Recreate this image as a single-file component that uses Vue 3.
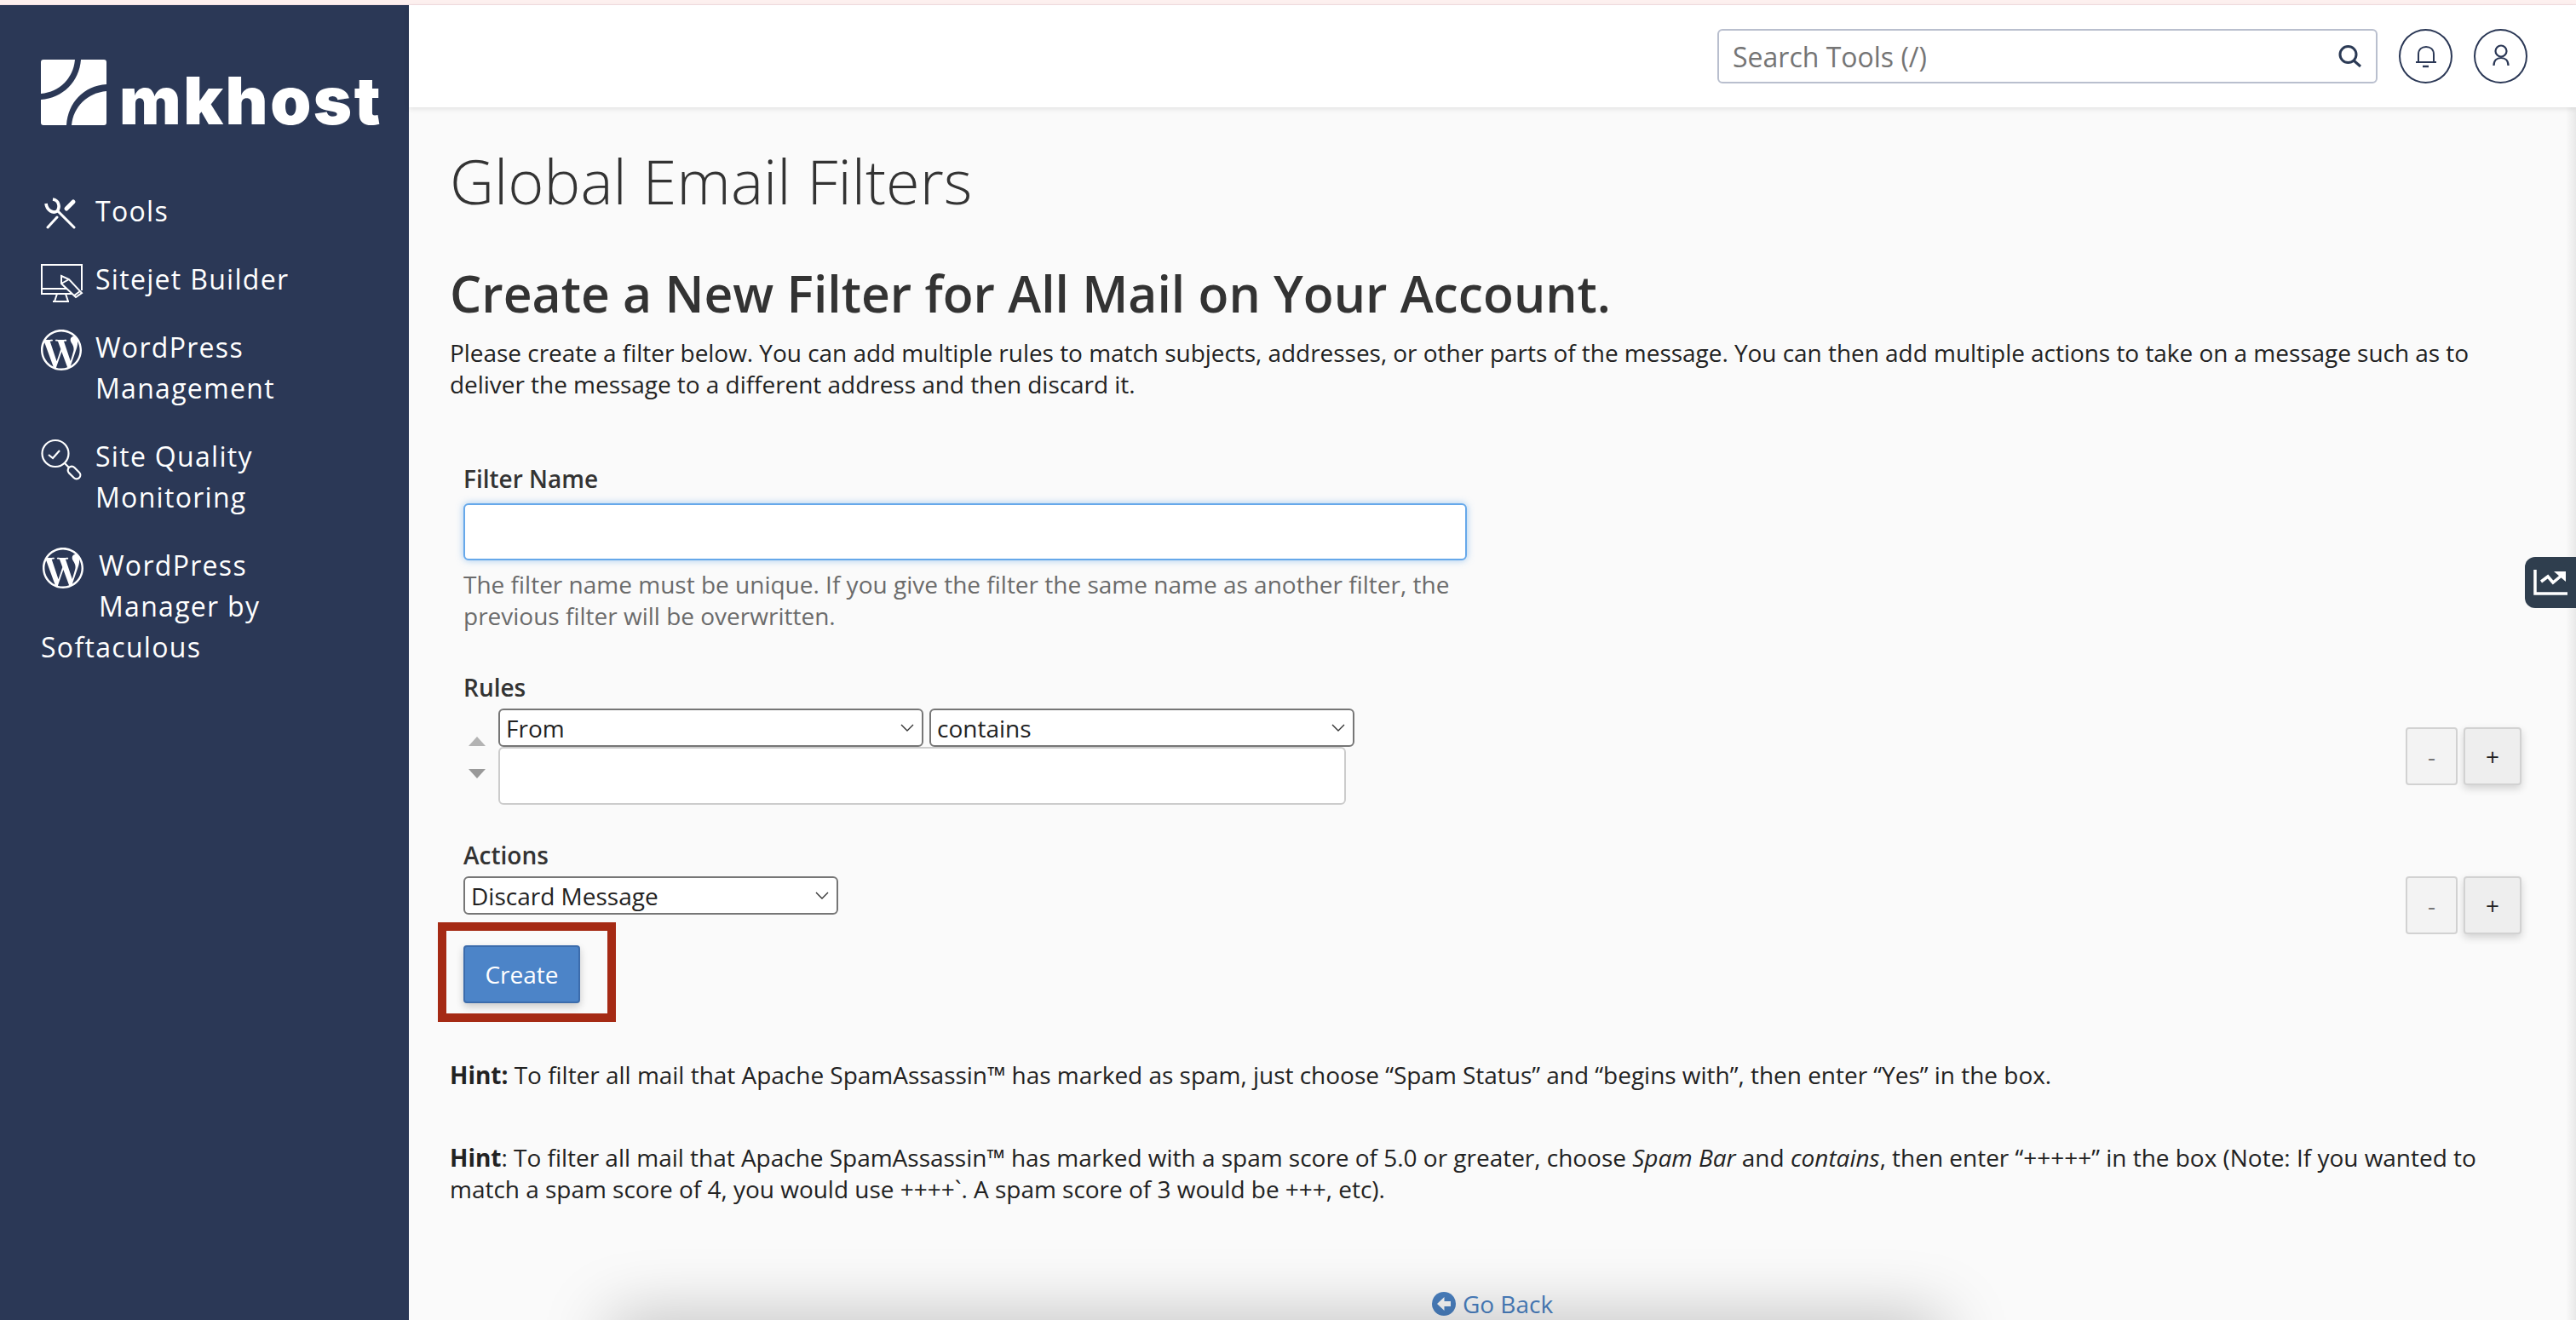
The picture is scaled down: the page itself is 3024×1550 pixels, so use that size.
<template>
  <div class="page">
    <div class="top-strip"></div>
    <div class="layout">
      <aside class="sidebar">
        <div class="logo">
          <svg class="logo-mark" viewBox="0 0 77 77" fill="#fff">
            <path d="M3 0H40C38 22 22 38 0 40V3Q0 0 3 0Z" />
            <path d="M47 0H74Q77 0 77 3V29C50 31 32 50 30 77H3Q0 77 0 74V47C26 45 45 26 47 0Z" />
            <path d="M77 37V74Q77 77 74 77H36C38 55 55 39 77 37Z" />
          </svg>
          <span class="logo-text">mkhost</span>
        </div>
        <nav class="nav">
          <a class="nav-item">
            <svg class="nav-icon" viewBox="0 0 48 48" fill="none" stroke="#fff" stroke-width="3">
              <path d="M8 43L19 31" stroke-linecap="round" />
              <path d="M30 21L38 13" stroke-width="5" stroke-linecap="round" />
              <path d="M39 43L20 24" stroke-linecap="round" />
              <path d="M14 10C21 11 23 19 19 24C14 27 7 23 6 15" stroke-width="3.6" />
            </svg>
            <span>Tools</span>
          </a>
          <a class="nav-item">
            <svg class="nav-icon" viewBox="0 0 48 48" fill="none" stroke="#fff" stroke-width="2">
              <path d="M30 35H1V7H48V37" />
              <path d="M1 35V41H36" />
              <path d="M19 41L16 50M29 41L32 50M14 50H33" />
              <path d="M24 20L33 24L48 40L41 45L24 29Z" />
              <path d="M24 29L33 24M39 43L46 38" />
            </svg>
            <span>Sitejet Builder</span>
          </a>
          <a class="nav-item">
            <svg class="nav-icon nav-icon-wp" viewBox="0 0 24 24" fill="#fff">
              <path d="M21.469 6.825c.84 1.537 1.318 3.3 1.318 5.175 0 3.979-2.156 7.456-5.363 9.325l3.295-9.527c.615-1.54.82-2.771.82-3.864 0-.405-.026-.78-.07-1.11m-7.981.105c.647-.03 1.232-.105 1.232-.105.582-.075.514-.93-.067-.899 0 0-1.755.135-2.88.135-1.064 0-2.85-.15-2.85-.15-.585-.03-.661.855-.075.885 0 0 .54.061 1.125.09l1.68 4.605-2.37 7.08L5.354 6.9c.649-.03 1.234-.1 1.234-.1.585-.075.516-.93-.065-.896 0 0-1.746.138-2.874.138-.2 0-.438-.008-.69-.015C4.911 3.15 8.235 1.215 12 1.215c2.809 0 5.365 1.072 7.286 2.833-.046-.003-.091-.009-.141-.009-1.06 0-1.812.923-1.812 1.914 0 .89.513 1.643 1.06 2.531.411.72.89 1.643.89 2.977 0 .915-.354 1.994-.821 3.479l-1.075 3.585-3.9-11.61.001.014zM12 22.784c-1.059 0-2.081-.153-3.048-.437l3.237-9.406 3.315 9.087c.024.053.05.101.078.149-1.12.393-2.325.609-3.582.609M1.211 12c0-1.564.336-3.05.935-4.39L7.29 21.709C3.694 19.96 1.212 16.271 1.211 12M12 0C5.385 0 0 5.385 0 12s5.385 12 12 12 12-5.385 12-12S18.615 0 12 0" />
            </svg>
            <span>WordPress<br />Management</span>
          </a>
          <a class="nav-item">
            <svg class="nav-icon" viewBox="0 0 48 48" fill="none" stroke="#fff" stroke-width="2.2">
              <circle cx="17" cy="20.5" r="15.5" />
              <path d="M9 22L14 26L22 17" />
              <path d="M28 32L33 37" />
              <rect x="0" y="-4.5" width="17" height="9" rx="4.5" transform="translate(33 37) rotate(45)" />
            </svg>
            <span>Site Quality<br />Monitoring</span>
          </a>
          <a class="nav-item nav-item-float">
            <svg class="nav-icon nav-icon-wp nav-icon-float" viewBox="0 0 24 24" fill="#fff">
              <path d="M21.469 6.825c.84 1.537 1.318 3.3 1.318 5.175 0 3.979-2.156 7.456-5.363 9.325l3.295-9.527c.615-1.54.82-2.771.82-3.864 0-.405-.026-.78-.07-1.11m-7.981.105c.647-.03 1.232-.105 1.232-.105.582-.075.514-.93-.067-.899 0 0-1.755.135-2.88.135-1.064 0-2.85-.15-2.85-.15-.585-.03-.661.855-.075.885 0 0 .54.061 1.125.09l1.68 4.605-2.37 7.08L5.354 6.9c.649-.03 1.234-.1 1.234-.1.585-.075.516-.93-.065-.896 0 0-1.746.138-2.874.138-.2 0-.438-.008-.69-.015C4.911 3.15 8.235 1.215 12 1.215c2.809 0 5.365 1.072 7.286 2.833-.046-.003-.091-.009-.141-.009-1.06 0-1.812.923-1.812 1.914 0 .89.513 1.643 1.06 2.531.411.72.89 1.643.89 2.977 0 .915-.354 1.994-.821 3.479l-1.075 3.585-3.9-11.61.001.014zM12 22.784c-1.059 0-2.081-.153-3.048-.437l3.237-9.406 3.315 9.087c.024.053.05.101.078.149-1.12.393-2.325.609-3.582.609M1.211 12c0-1.564.336-3.05.935-4.39L7.29 21.709C3.694 19.96 1.212 16.271 1.211 12M12 0C5.385 0 0 5.385 0 12s5.385 12 12 12 12-5.385 12-12S18.615 0 12 0" />
            </svg>
            WordPress Manager by Softaculous
          </a>
        </nav>
      </aside>

      <div class="main">
        <header class="topbar">
          <div class="search">
            <input class="search-input" type="text" placeholder="Search Tools (/)" />
            <svg class="search-icon" viewBox="0 0 28 28" fill="none" stroke="#2b3a55" stroke-width="3">
              <circle cx="11.5" cy="12" r="9.5" />
              <path d="M18 19L26 26" />
            </svg>
          </div>
          <button class="round-btn">
            <svg viewBox="0 0 24 32" width="24" height="32" fill="none" stroke="#2b3856" stroke-width="2">
              <path d="M3 23V14C3 8 7 5 12 5S21 8 21 14V23" />
              <path d="M0 23H24" />
              <path d="M8 28H15" stroke-width="2.4" />
            </svg>
          </button>
          <button class="round-btn">
            <svg viewBox="0 0 24 32" width="24" height="32" fill="none" stroke="#2b3856" stroke-width="2.2">
              <circle cx="12" cy="10" r="6.5" />
              <path d="M3.5 27C3.5 21 7 18 12 18S20.5 21 20.5 27" />
            </svg>
          </button>
        </header>

        <main class="content">
          <h1 class="title">Global Email Filters</h1>
          <h2 class="subtitle">Create a New Filter for All Mail on Your Account.</h2>
          <p class="intro">Please create a filter below. You can add multiple rules to match subjects, addresses, or other parts of the message. You can then add multiple actions to take on a message such as to deliver the message to a different address and then discard it.</p>

          <form class="filter-form" @submit.prevent>
            <label class="field-label first">Filter Name</label>
            <input class="name-input" type="text" />
            <p class="help">The filter name must be unique. If you give the filter the same name as another filter, the previous filter will be overwritten.</p>

            <label class="field-label rules-label">Rules</label>
            <div class="rule-row">
              <div class="arrows">
                <span class="arrow-up"></span>
                <span class="arrow-down"></span>
              </div>
              <div class="rule-fields">
                <div class="rule-selects">
                  <select class="sel sel-rule"><option>From</option></select>
                  <select class="sel sel-rule"><option>contains</option></select>
                </div>
                <input class="rule-input" type="text" />
              </div>
              <div class="step-btns">
                <button class="step minus" type="button">-</button>
                <button class="step plus" type="button">+</button>
              </div>
            </div>

            <label class="field-label actions-label">Actions</label>
            <div class="action-row">
              <select class="sel sel-action"><option>Discard Message</option></select>
              <div class="step-btns">
                <button class="step minus" type="button">-</button>
                <button class="step plus" type="button">+</button>
              </div>
            </div>

            <div class="create-wrap">
              <button class="create" type="submit">Create</button>
              <div class="highlight"></div>
            </div>
          </form>

          <p class="hint hint-first"><b>Hint:</b> To filter all mail that Apache SpamAssassin™ has marked as spam, just choose “Spam Status” and “begins with”, then enter “Yes” in the box.</p>
          <p class="hint hint-second"><b>Hint</b>: To filter all mail that Apache SpamAssassin™ has marked with a spam score of 5.0 or greater, choose <i>Spam Bar</i> and <i>contains</i>, then enter “+++++” in the box (Note: If you wanted to match a spam score of 4, you would use ++++`. A spam score of 3 would be +++, etc).</p>

          <a class="go-back">
            <svg viewBox="0 0 28 28" width="28" height="28">
              <circle cx="14" cy="14" r="14" fill="#4a80c0" />
              <path d="M14.5 6L6 14L14.5 22V17H22V11H14.5Z" fill="#fafafa" />
            </svg>
            Go Back
          </a>
        </main>
      </div>
    </div>

    <div class="stats-tab">
      <svg viewBox="0 0 40 30" width="40" height="30" fill="none" stroke="#fff" stroke-width="3.5">
        <path d="M2 0V28H40" />
        <path d="M9 14L17 8L23 15L34 6" />
        <path d="M24 2H38V14Z" fill="#fff" stroke="none" />
      </svg>
    </div>
    <div class="edge-shade"></div>
    <div class="bottom-shadow"></div>
  </div>
</template>

<script setup>
</script>

<style>
html,
body {
  margin: 0;
  background: #fafafa;
}
</style>

<style scoped>
.page {
  position: relative;
  width: 3024px;
  height: 1550px;
  overflow: hidden;
  background: #fafafa;
  font-family: "Open Sans", "Liberation Sans", sans-serif;
  color: #333;
}

.top-strip {
  height: 6px;
  background: #fdf0ef;
  border-bottom: 1px solid #f3dfe2;
  box-sizing: border-box;
}

.layout {
  display: flex;
  height: 1544px;
}

.sidebar {
  width: 480px;
  flex-shrink: 0;
  box-sizing: border-box;
  padding: 64px 30px 0 48px;
  background: #2b3856;
  color: #fff;
}

.logo {
  display: flex;
  align-items: flex-end;
  gap: 15px;
  height: 77px;
}

.logo-mark {
  width: 77px;
  height: 77px;
  flex-shrink: 0;
}

.logo-text {
  font-family: Inter, "Liberation Sans", sans-serif;
  font-weight: 900;
  font-size: 77px;
  line-height: 58px;
  letter-spacing: 2.6px;
  color: #fff;
}

.nav {
  margin-top: 77px;
  width: 340px;
  display: flex;
  flex-direction: column;
  gap: 32px;
  font-size: 32px;
  line-height: 48px;
  letter-spacing: 1.3px;
}

.nav-item {
  display: flex;
  align-items: flex-start;
  gap: 16px;
}

.nav-icon {
  width: 48px;
  height: 48px;
  flex-shrink: 0;
  overflow: visible;
}

.nav-icon-wp {
  margin-top: 3px;
}

.nav-item-float {
  display: block;
}

.nav-icon-float {
  float: left;
  margin: 3px 18px 37px 2px;
}

.main {
  flex: 1;
  min-width: 0;
}

.topbar {
  height: 120px;
  box-sizing: border-box;
  padding: 28px 57px 0 0;
  display: flex;
  justify-content: flex-end;
  align-items: flex-start;
  gap: 25px;
  background: #fff;
  box-shadow: 0 2px 6px rgba(0, 0, 0, 0.1);
}

.search {
  position: relative;
  width: 775px;
  height: 64px;
}

.search-input {
  width: 100%;
  height: 100%;
  box-sizing: border-box;
  border: 2px solid #b9bfce;
  border-radius: 6px;
  padding: 0 16px;
  font-family: inherit;
  font-size: 32px;
  background: #fff;
  outline: none;
}

.search-input::placeholder {
  color: #757575;
}

.search-icon {
  position: absolute;
  right: 18px;
  top: 18px;
  width: 28px;
  height: 28px;
}

.round-btn {
  width: 63px;
  height: 64px;
  padding: 0;
  border: 2px solid #2b3856;
  border-radius: 50%;
  background: #fff;
  display: flex;
  align-items: center;
  justify-content: center;
}

.content {
  padding: 0 64px 0 48px;
}

.title {
  margin: 44px 0 0;
  font-size: 72px;
  line-height: 84px;
  font-weight: 300;
  color: #333;
}

.subtitle {
  margin: 48px 0 0;
  font-size: 58.8px;
  line-height: 84px;
  font-weight: 600;
  color: #333;
}

.intro {
  margin: 10px 0 0;
  font-size: 28px;
  line-height: 37px;
  letter-spacing: -0.04px;
  color: #222;
}

.filter-form {
  padding-left: 16px;
}

.field-label {
  display: block;
  font-size: 28px;
  line-height: 37px;
  font-weight: 600;
  color: #333;
}

.first {
  margin-top: 74px;
}

.name-input {
  display: block;
  width: 1178px;
  height: 67px;
  margin-top: 10px;
  box-sizing: border-box;
  border: 2px solid #66a8ea;
  border-radius: 6px;
  background: #fff;
  box-shadow: 0 0 8px rgba(102, 168, 234, 0.6);
  outline: none;
}

.help {
  width: 1178px;
  margin: 10px 0 0;
  font-size: 28px;
  line-height: 37px;
  color: #6b6b6b;
}

.rules-label {
  margin-top: 47px;
}

.rule-row {
  display: flex;
  margin-top: 6px;
}

.arrows {
  width: 41px;
  flex-shrink: 0;
  padding-top: 33px;
  box-sizing: border-box;
}

.arrow-up,
.arrow-down {
  display: block;
  width: 0;
  margin-left: 6px;
  border-left: 10px solid transparent;
  border-right: 10px solid transparent;
}

.arrow-up {
  border-bottom: 11px solid #b3b3b3;
}

.arrow-down {
  margin-top: 27px;
  border-top: 11px solid #999;
}

.rule-fields {
  flex: 1;
}

.rule-selects {
  display: flex;
  gap: 7px;
}

.sel {
  appearance: none;
  height: 45px;
  box-sizing: border-box;
  border: 2px solid #767676;
  border-radius: 6px;
  padding: 0 7px;
  background: #fff url("data:image/svg+xml,%3Csvg xmlns='http://www.w3.org/2000/svg' width='16' height='9'%3E%3Cpath d='M1 1L8 8L15 1' fill='none' stroke='%23333' stroke-width='1.4'/%3E%3C/svg%3E") no-repeat right 9px center;
  font-family: inherit;
  font-size: 28px;
  color: #222;
}

.sel-rule {
  width: 499px;
}

.sel-action {
  width: 440px;
}

.rule-input {
  display: block;
  width: 995px;
  height: 68px;
  box-sizing: border-box;
  border: 2px solid #ccc;
  border-radius: 6px;
  background: #fff;
  outline: none;
}

.step-btns {
  display: flex;
  gap: 7px;
}

.rule-row .step-btns {
  margin-top: 22px;
}

.step {
  height: 68px;
  box-sizing: border-box;
  padding: 0;
  border: 2px solid #d2d2d2;
  border-radius: 4px;
  font-family: inherit;
  font-size: 28px;
}

.minus {
  width: 61px;
  background: #f3f3f3;
  color: #777;
}

.plus {
  width: 68px;
  background: #eee;
  color: #222;
  box-shadow: 0 4px 10px rgba(0, 0, 0, 0.16);
}

.actions-label {
  margin-top: 41px;
}

.action-row {
  display: flex;
  justify-content: space-between;
  margin-top: 6px;
}

.create-wrap {
  position: relative;
  margin-top: 13px;
  width: 137px;
}

.create {
  display: block;
  width: 137px;
  height: 68px;
  padding: 0;
  border: 2px solid #3c6cac;
  border-radius: 4px;
  background: #4c84c8;
  color: #fff;
  font-family: inherit;
  font-size: 28px;
  box-shadow: 0 4px 10px rgba(0, 0, 0, 0.2);
}

.highlight {
  position: absolute;
  left: -30px;
  top: -27px;
  width: 209px;
  height: 117px;
  box-sizing: border-box;
  border: 10px solid #a52a14;
  pointer-events: none;
}

.hint {
  font-size: 28px;
  line-height: 37px;
  letter-spacing: -0.02px;
  color: #222;
  margin: 0;
}

.hint b {
  color: #222;
}

.hint-first {
  margin-top: 66px;
}

.hint-second {
  margin-top: 60px;
}

.go-back {
  display: flex;
  align-items: center;
  justify-content: center;
  gap: 8px;
  margin-top: 97px;
  padding-left: 16px;
  font-size: 28px;
  line-height: 38px;
  color: #4a80c0;
}

.stats-tab {
  position: absolute;
  right: 0;
  top: 654px;
  width: 60px;
  height: 60px;
  box-sizing: border-box;
  padding: 15px 0 0 10px;
  background: #2f3e4e;
  border-radius: 12px 0 0 12px;
  z-index: 2;
}

.edge-shade {
  position: absolute;
  right: 0;
  top: 126px;
  bottom: 0;
  width: 12px;
  background: linear-gradient(to right, rgba(0, 0, 0, 0), rgba(0, 0, 0, 0.07));
}

.bottom-shadow {
  position: absolute;
  left: 717px;
  top: 1550px;
  width: 1563px;
  height: 60px;
  box-shadow: 0 0 80px rgba(0, 0, 0, 0.28);
}
</style>
